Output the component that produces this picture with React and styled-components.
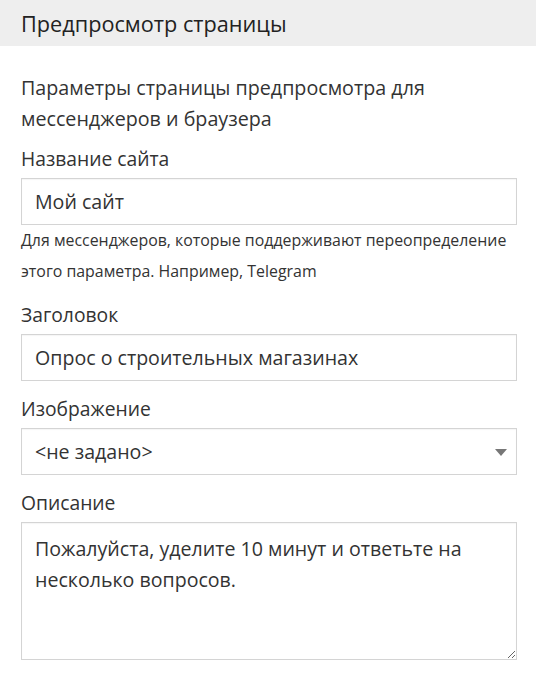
import React from "react";
import styled, { createGlobalStyle } from "styled-components";

const GlobalStyle = createGlobalStyle`
  body {
    margin: 0;
    background: #fff;
    font-family: "Open Sans", "Noto Sans", sans-serif;
    color: #333;
  }
`;

const App = () => {
  return (
    <>
      <GlobalStyle />
      <Panel>
        <Header>Предпросмотр страницы</Header>
        <Body>
          <Intro>Параметры страницы предпросмотра для мессенджеров и браузера</Intro>

          <Group>
            <Label>Название сайта</Label>
            <Input defaultValue="Мой сайт" />
            <Help>
              Для мессенджеров, которые поддерживают переопределение этого
              параметра. Например, Telegram
            </Help>
          </Group>

          <Group>
            <Label>Заголовок</Label>
            <Input defaultValue="Опрос о строительных магазинах" />
          </Group>

          <Group>
            <Label>Изображение</Label>
            <SelectWrap>
              <Select defaultValue="none">
                <option value="none">&lt;не задано&gt;</option>
              </Select>
              <Arrow width="12" height="7" viewBox="0 0 12 7">
                <path d="M0 0h12L6 7z" fill="#777" />
              </Arrow>
            </SelectWrap>
          </Group>

          <Group>
            <Label>Описание</Label>
            <TextArea defaultValue="Пожалуйста, уделите 10 минут и ответьте на несколько вопросов." />
          </Group>
        </Body>
      </Panel>
    </>
  );
};

const Panel = styled.div`
  width: 536px;
`;

const Header = styled.div`
  height: 46px;
  display: flex;
  align-items: center;
  padding: 0 21px;
  background: #eeeeee;
  font-size: 21.7px;
  color: #222;
`;

const Body = styled.div`
  padding: 26px 19px 0 21px;
`;

const Intro = styled.p`
  margin: 0 0 11px;
  font-size: 19.7px;
  line-height: 31px;
`;

const Group = styled.div`
  margin-bottom: 14px;
`;

const Label = styled.div`
  font-size: 19.3px;
  line-height: 28px;
  margin-bottom: 5px;
`;

const fieldStyles = `
  box-sizing: border-box;
  width: 100%;
  border: 1px solid #d4d4d4;
  border-radius: 0;
  background: #fff;
  font-family: "Open Sans", "Noto Sans", sans-serif;
  font-size: 19.6px;
  color: #333;
  padding: 0 13px;
  outline: none;
  box-shadow: inset 0 1px 1px rgba(0, 0, 0, 0.04);
`;

const Input = styled.input`
  ${fieldStyles}
  height: 47px;
  display: block;
`;

const Help = styled.div`
  font-size: 15.9px;
  line-height: 31px;
`;

const SelectWrap = styled.div`
  position: relative;
`;

const Select = styled.select`
  ${fieldStyles}
  height: 47px;
  display: block;
  appearance: none;
  -webkit-appearance: none;
`;

const Arrow = styled.svg`
  position: absolute;
  right: 10px;
  top: 21px;
`;

const TextArea = styled.textarea`
  ${fieldStyles}
  display: block;
  height: 138px;
  padding: 10px 13px;
  line-height: 31px;
  resize: vertical;
`;

export default App;
